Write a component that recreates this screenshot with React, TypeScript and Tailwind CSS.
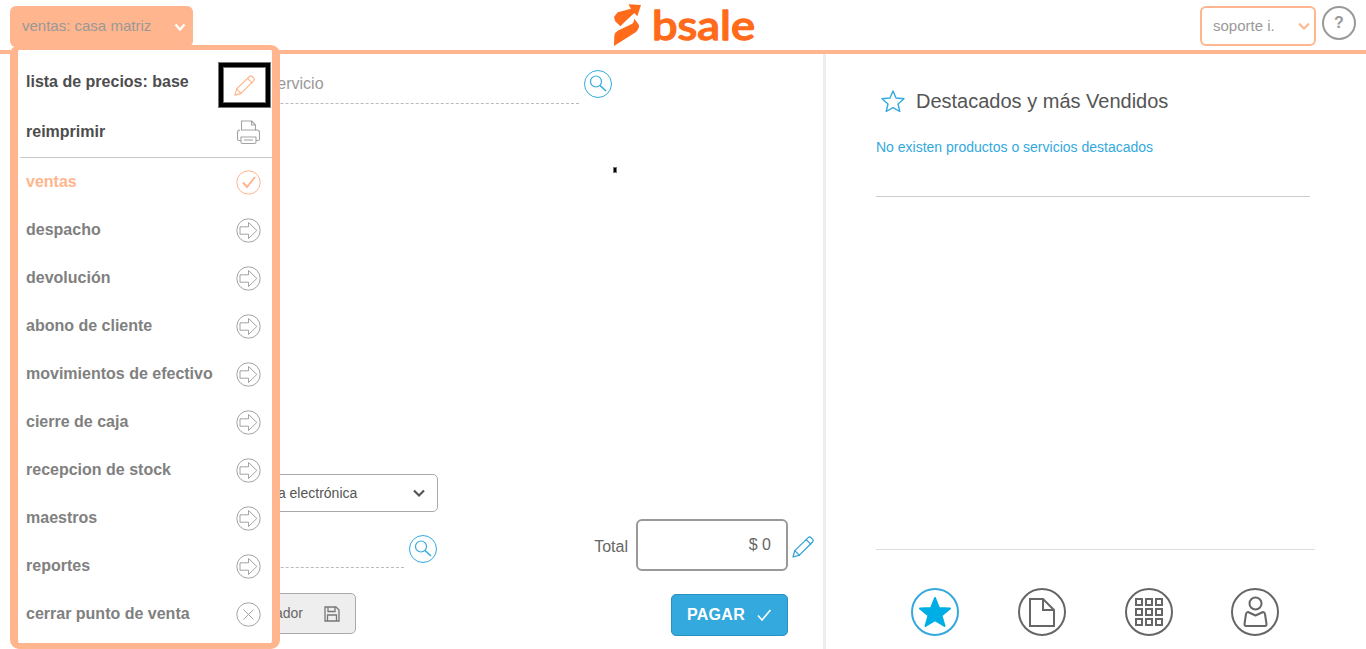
import React from "react";

const FONT = { fontFamily: '"Liberation Sans", Arial, sans-serif' };

function Pencil({ color, size = 24 }: { color: string; size?: number }) {
  return (
    <svg width={size} height={size} viewBox="0 0 24 24" fill="none" stroke={color} strokeWidth="1.2" strokeLinejoin="round" strokeLinecap="round">
      <path d="M2 22 L3.8 15.6 L17.2 2.6 a2 2 0 0 1 2.8 0 l1.6 1.6 a2 2 0 0 1 0 2.8 L8.4 20.2 Z" />
      <path d="M3.8 15.6 L8.4 20.2 M15.2 4.6 L19.8 9.2" />
    </svg>
  );
}

function SearchCircle() {
  return (
    <svg width="28" height="28" viewBox="0 0 28 28" fill="none" stroke="#33a9dd">
      <circle cx="14" cy="14" r="13.5" strokeWidth="1" />
      <circle cx="12" cy="11.5" r="5.5" strokeWidth="1.2" />
      <path d="M16 15.5 L22 21" strokeWidth="1.6" />
    </svg>
  );
}

function ArrowCircle() {
  return (
    <svg width="25" height="25" viewBox="0 0 25 25" fill="none" stroke="#a3a3a3" strokeWidth="1">
      <circle cx="12.5" cy="12.5" r="11.7" />
      <path d="M4 8.8 H12.5 V4.5 L20.8 12.5 L12.5 20.5 V16.2 H4 Z" strokeLinejoin="round" />
    </svg>
  );
}

function CheckCircle() {
  return (
    <svg width="25" height="25" viewBox="0 0 25 25" fill="none" stroke="#ffb58d">
      <circle cx="12.5" cy="12.5" r="11.7" strokeWidth="1" />
      <path d="M7 12.5 L11 17 L19 7" strokeWidth="2" />
    </svg>
  );
}

function CloseCircle() {
  return (
    <svg width="25" height="25" viewBox="0 0 25 25" fill="none" stroke="#a3a3a3" strokeWidth="1">
      <circle cx="12.5" cy="12.5" r="11.7" />
      <path d="M7.5 7.5 L17.5 17.5 M17.5 7.5 L7.5 17.5" />
    </svg>
  );
}

function Printer() {
  return (
    <svg width="25" height="25" viewBox="0 0 25 25" fill="none" stroke="#a3a3a3" strokeWidth="1.1" strokeLinejoin="round">
      <path d="M5.5 10.5 V1 H15.5 L19.5 5 V10.5" />
      <path d="M15.5 1 V5 H19.5" />
      <path d="M5.5 10 H21 Q23.5 10 23.5 12.5 V19 Q23.5 20.5 22 20.5 H20 M5 20.5 H3 Q1.5 20.5 1.5 19 V12.5 Q1.5 10 4 10" />
      <path d="M5 17 H20 V22 Q20 23.5 18.5 23.5 H6.5 Q5 23.5 5 22 Z" />
      <path d="M8 20 H17" />
    </svg>
  );
}

function Logo() {
  return (
    <div className="flex items-start gap-[8px]">
      <svg className="mt-[3px]" width="30" height="44" viewBox="24 8 90 132" fill="#ff6b1a">
        <path d="M27 50 L38 36 L78 25 L70 12 L108 14 L97 48 L88 38 L62 62 L46 78 L30 62 Z" strokeLinejoin="round" />
        <path d="M27 137 L28 106 Q29 96 38 91 L82 70 Q87 66 88 55 L102 74 Q103 86 92 96 Z" />
      </svg>
      <svg width="104" height="50" viewBox="0 0 104 50">
        <text x="1" y="40" fill="#ff6b1a" stroke="#ff6b1a" strokeWidth="1.4" strokeLinejoin="round" textLength="103" lengthAdjust="spacingAndGlyphs" style={{ fontFamily: "Lato, sans-serif", fontSize: 40, fontWeight: 500 }}>
          bsale
        </text>
      </svg>
    </div>
  );
}

const rows = ["despacho", "devolución", "abono de cliente", "movimientos de efectivo", "cierre de caja", "recepcion de stock", "maestros", "reportes"];

function MenuPanel() {
  return (
    <div className="absolute left-[10px] top-[45px] h-[604px] w-[270px] rounded-[9px] border-x-[8px] border-b-[6px] border-t-[5px] border-[#ffb58d] bg-white">
      <div className="flex h-[107px] flex-col">
        <div className="flex h-[57px] items-end justify-between pl-[8px] pr-[2px] text-[16px] font-bold text-[#4d4d4d]">
          <span className="mb-[13px]">lista de precios: base</span>
          <div className="flex h-[44px] w-[51px] items-center justify-center border-[4px] border-black shadow-[inset_0_0_0_1px_#777,0_0_0_1px_#777]">
            <Pencil color="#ffb58d" size={23} />
          </div>
        </div>
        <div className="flex h-[50px] items-center justify-between pl-[8px] pr-[11px] text-[16px] font-bold text-[#4d4d4d]">
          <span>reimprimir</span>
          <Printer />
        </div>
      </div>
      <div className="ml-[2px] h-px w-[252px] bg-[#c8c8c8]" />
      <div className="flex h-[48px] items-center justify-between pl-[8px] pr-[11px] text-[16px] font-bold text-[#ffb58d]">
        <span>ventas</span>
        <CheckCircle />
      </div>
      {rows.map((r) => (
        <div key={r} className="flex h-[48px] items-center justify-between pl-[8px] pr-[11px] text-[16px] font-bold text-[#808080]">
          <span>{r}</span>
          <ArrowCircle />
        </div>
      ))}
      <div className="flex h-[48px] items-center justify-between pl-[8px] pr-[11px] text-[16px] font-bold text-[#808080]">
        <span>cerrar punto de venta</span>
        <CloseCircle />
      </div>
    </div>
  );
}

function Header() {
  return (
    <header className="relative flex h-[54px] items-start justify-between border-b-[4px] border-[#ffb58d] bg-white">
      <div className="ml-[10px] mt-[6px] flex h-[41px] w-[183px] items-center justify-between rounded-[6px] bg-[#ffb58d] pl-[12px] pr-[6px]">
        <span className="text-[15px] text-[#999]">ventas: casa matriz</span>
        <svg width="14" height="14" viewBox="0 0 14 14" fill="none" stroke="#fff" strokeWidth="2.2">
          <path d="M2.5 4.5 L7 9.5 L11.5 4.5" />
        </svg>
      </div>
      <div className="mr-[25px]"><Logo /></div>
      <div className="mr-[10px] mt-[6px] flex items-start gap-[6px]">
        <div className="flex h-[40px] w-[116px] items-center justify-between rounded-[6px] border-2 border-[#ffb58d] pl-[11px] pr-[3px]">
          <span className="text-[15px] text-[#999]">soporte i.</span>
          <svg width="14" height="14" viewBox="0 0 14 14" fill="none" stroke="#ffb58d" strokeWidth="2">
            <path d="M2 4.5 L7 9.5 L12 4.5" />
          </svg>
        </div>
        <div className="flex h-[34px] w-[34px] items-center justify-center rounded-full border-2 border-[#999] text-[16px] font-bold text-[#999]">?</div>
      </div>
    </header>
  );
}

function LeftColumn() {
  return (
    <section className="flex w-[826px] shrink-0 flex-col border-r-[3px] border-[#eeeeee] pb-[13px]">
      <div className="ml-[20px] mt-[16px] flex items-center">
        <div className="flex h-[34px] w-[559px] items-center justify-start border-b border-dashed border-[#bbb] pb-[5px] pl-[115px] text-[16px] text-[#999]">
          Buscar producto o servicio
        </div>
        <div className="-mt-[6px] ml-[5px]"><SearchCircle /></div>
      </div>
      <div className="ml-[613px] mt-[63px] h-[6px] w-[4px] border border-[#777] bg-black" />
      <div className="flex-1" />
      <div className="flex items-start justify-between pl-[20px] pr-[8px]">
        <div className="flex flex-col">
          <div className="flex h-[38px] w-[418px] items-center justify-between rounded-[5px] border border-[#aaa] pl-[225px] pr-[11px] text-[14px] text-[#555]">
            <span>Boleta electrónica</span>
            <svg width="14" height="14" viewBox="0 0 14 14" fill="none" stroke="#555" strokeWidth="2.2">
              <path d="M2 4.5 L7 9.5 L12 4.5" />
            </svg>
          </div>
          <div className="mt-[22px] flex items-center">
            <div className="h-[34px] w-[384px] border-b border-dashed border-[#bbb]" />
            <div className="-mt-[4px] ml-[5px]"><SearchCircle /></div>
          </div>
          <div className="mt-[25px] flex h-[41px] w-[336px] items-center justify-end self-start rounded-[5px] border border-[#aaa] bg-[#eeeeee] pr-[15px] text-[14px] text-[#666]">
            <span>Comprador</span>
            <svg className="ml-[21px]" width="16" height="16" viewBox="0 0 16 16" fill="none" stroke="#777" strokeWidth="1.3">
              <path d="M1 1 H12 L15 4 V15 H1 Z" />
              <path d="M4 1 V5.5 H11 V1 M3.5 15 V9 H12.5 V15" />
            </svg>
          </div>
        </div>
        <div className="mt-[45px] flex flex-col items-end">
          <div className="flex items-center">
            <span className="mr-[8px] mt-[4px] text-[16px] text-[#666]">Total</span>
            <div className="flex h-[52px] w-[152px] items-center justify-end rounded-[6px] border-2 border-[#999] pr-[15px] text-[16px] text-[#666]">$ 0</div>
            <div className="ml-[3px] mt-[3px]"><Pencil color="#2a9fd6" /></div>
          </div>
          <button className="mr-[27px] mt-[23px] flex h-[42px] w-[117px] items-center justify-center gap-[11px] rounded-[5px] border border-[#2a90c0] bg-[#33a9dd] text-[16px] font-bold tracking-[0.3px] text-white">
            PAGAR
            <svg width="16" height="16" viewBox="0 0 16 16" fill="none" stroke="#fff" strokeWidth="1.5">
              <path d="M2 8.5 L6 13 L14.5 3" />
            </svg>
          </button>
        </div>
      </div>
    </section>
  );
}

function RoundIcon({ blue, children }: { blue?: boolean; children: React.ReactNode }) {
  return (
    <div className={blue ? "flex h-[48px] w-[48px] items-center justify-center rounded-full border-2 border-[#33a9dd]" : "flex h-[48px] w-[48px] items-center justify-center rounded-full border-2 border-[#666]"}>
      {children}
    </div>
  );
}

function RightColumn() {
  return (
    <section className="flex flex-1 flex-col pl-[50px] pr-[51px]">
      <div className="mt-[32px] flex items-center pl-[5px]">
        <svg width="24" height="24" viewBox="0 0 24 24" fill="none" stroke="#33a9dd" strokeWidth="1.4" strokeLinejoin="round">
          <path d="M12 2 L15 9 L23 9.8 L17 15 L18.8 22.5 L12 18.6 L5.2 22.5 L7 15 L1 9.8 L9 9 Z" />
        </svg>
        <h2 className="ml-[11px] text-[20px] text-[#555]">Destacados y más Vendidos</h2>
      </div>
      <p className="mt-[21px] text-[14px] text-[#33a9dd]">No existen productos o servicios destacados</p>
      <div className="mr-[5px] mt-[38px] h-px bg-[#ccc]" />
      <div className="flex-1" />
      <div className="h-px bg-[#ddd]" />
      <div className="flex h-[99px] items-start justify-between pl-[35px] pr-[36px] pt-[38px]">
        <RoundIcon blue>
          <svg width="34" height="34" viewBox="0 0 34 34" fill="#00aee6" stroke="#00aee6" strokeWidth="2" strokeLinejoin="round">
            <path d="M17 3 L21 13 L32 13.5 L23.5 20.5 L26.5 31 L17 25.2 L7.5 31 L10.5 20.5 L2 13.5 L13 13 Z" />
          </svg>
        </RoundIcon>
        <div className="ml-[1px]">
          <RoundIcon>
            <svg width="26" height="29" viewBox="0 0 26 29" fill="none" stroke="#666" strokeWidth="2">
              <path d="M1 1 H14 L25 12 V28 H1 Z" />
              <path d="M14 1 V12 H25" />
            </svg>
          </RoundIcon>
        </div>
        <div className="ml-[1px]">
          <RoundIcon>
            <svg width="28" height="28" viewBox="0 0 28 28" fill="none" stroke="#666" strokeWidth="2">
              {[1, 11, 21].map((y) => [1, 11, 21].map((x) => <rect key={`${x}-${y}`} x={x} y={y} width="6" height="6" />))}
            </svg>
          </RoundIcon>
        </div>
        <RoundIcon>
          <svg width="25" height="32" viewBox="0 0 25 32" fill="none" stroke="#666" strokeWidth="2" strokeLinejoin="round">
            <circle cx="12.5" cy="7.5" r="6" />
            <path d="M5 16 L12.5 19.5 L20 16 Q21.5 16 22 18 L23.5 28 Q23.5 30 22 30 H3 Q1.5 30 1.5 28 L3 18 Q3.5 16 5 16 Z" />
          </svg>
        </RoundIcon>
      </div>
    </section>
  );
}

export default function App() {
  return (
    <div className="relative flex h-[649px] w-[1366px] flex-col overflow-hidden bg-white" style={FONT}>
      <Header />
      <main className="flex min-h-0 flex-1">
        <LeftColumn />
        <RightColumn />
      </main>
      <MenuPanel />
    </div>
  );
}
